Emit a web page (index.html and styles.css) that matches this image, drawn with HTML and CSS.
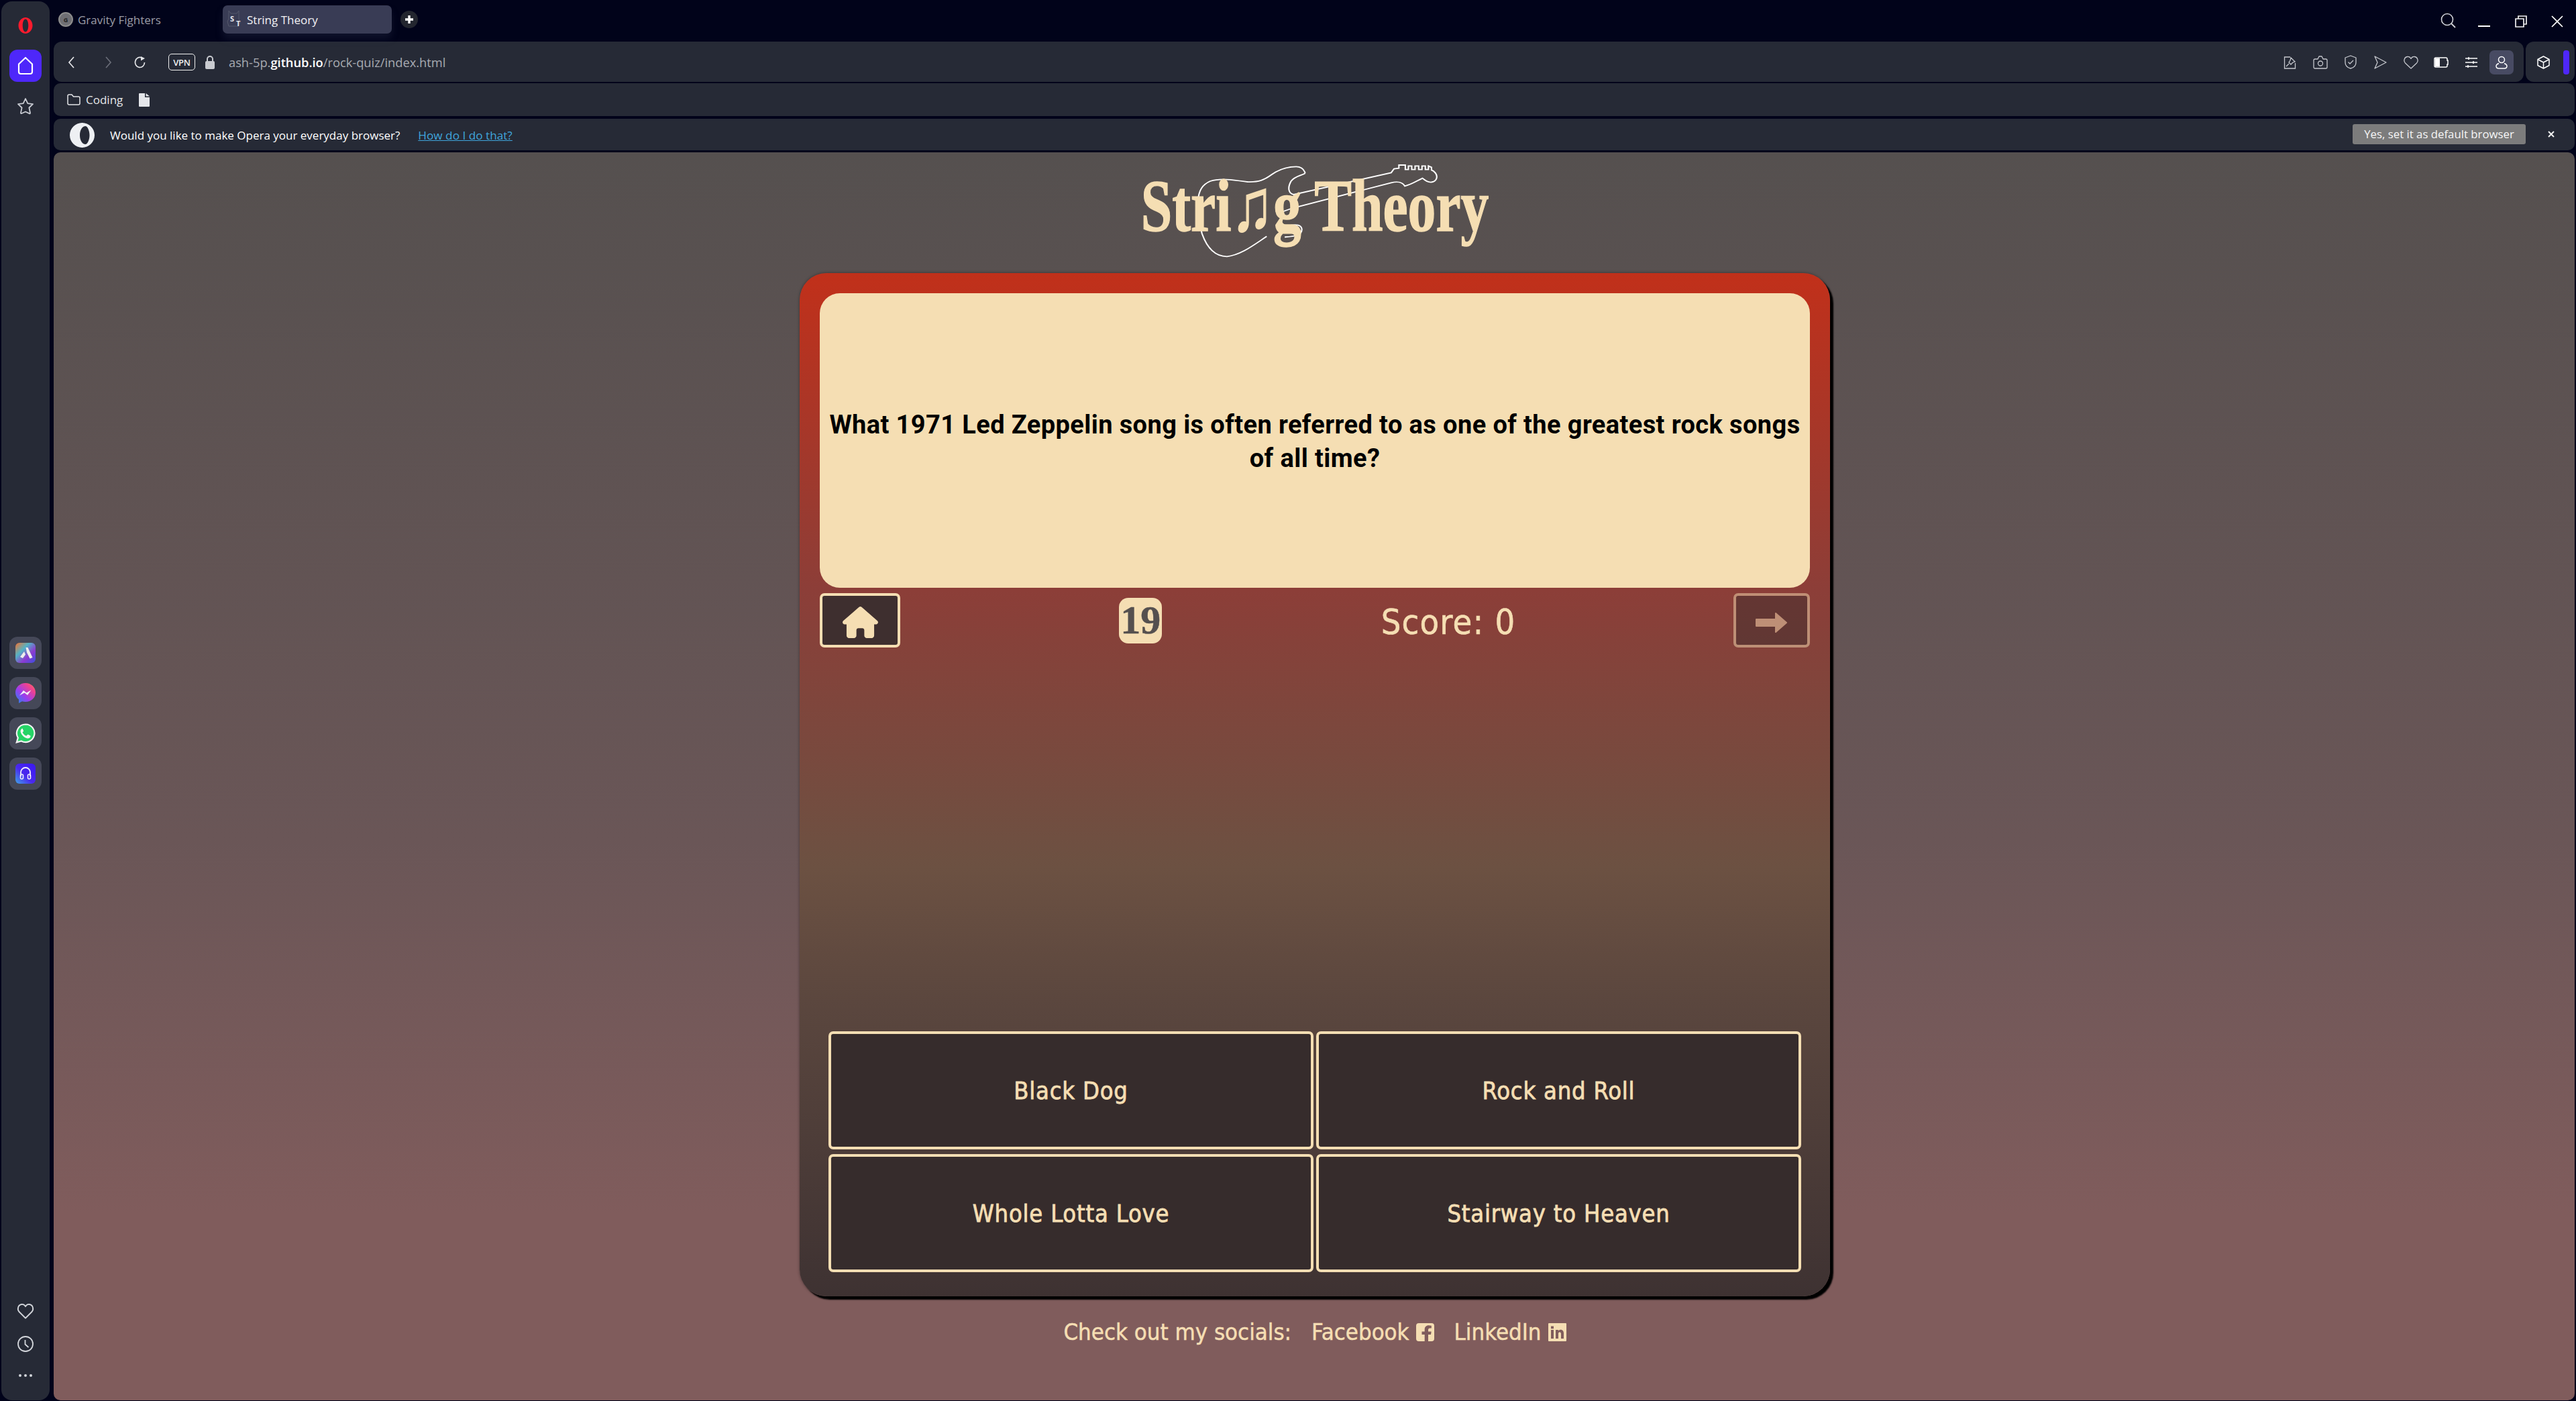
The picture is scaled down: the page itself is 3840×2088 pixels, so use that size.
FILE: index.html
```html
<!DOCTYPE html>
<html lang="en">
<head>
<meta charset="utf-8">
<title>String Theory</title>
<link rel="stylesheet" href="styles.css">
</head>
<body>
<div class="app">
  <aside class="sidebar">
    <div class="side-logo">
      <svg width="26" height="26" viewBox="0 0 26 26"><path fill="#ff1b2d" fill-rule="evenodd" d="M13 1C7.500 1 2.500 6.300 2.500 13S7.500 25 13 25s10.500-5.300 10.500-12S18.500 1 13 1zm0 2.500c2.700 0 4.300 4.500 4.300 9.500s-1.600 9.500-4.300 9.500-4.300-4.500-4.300-9.500S10.300 3.500 13 3.500z"/></svg>
    </div>
    <div class="side-home">
      <svg width="24" height="28" viewBox="0 0 24 28"><path fill="none" stroke="#fff" stroke-width="2.200" stroke-linejoin="round" d="M12 2 2 11.500V23c0 2 1.300 3 3 3h14c1.700 0 3-1 3-3V11.500z"/></svg>
    </div>
    <div class="side-star">
      <svg width="26" height="26" viewBox="0 0 26 26"><path fill="none" stroke="#c9ccd3" stroke-width="1.800" stroke-linejoin="round" d="M13 2l3.300 7.200 7.700 1-5.600 5.300 1.600 7.700c.2 1-.5 1.300-1.300.9L13 21.500 7.300 24c-.8.400-1.500.1-1.300-.9l1.600-7.600L2 10.200l7.700-1z"/></svg>
    </div>
    <div class="side-apps">
      <div class="app-tile">
        <svg width="30" height="30" viewBox="0 0 30 30"><defs><linearGradient id="ga" x1="0" y1="0" x2="1" y2="1"><stop offset="0" stop-color="#f5702d"/><stop offset=".35" stop-color="#54b3c4"/><stop offset=".65" stop-color="#8c3bd0"/><stop offset="1" stop-color="#3b4fe0"/></linearGradient></defs><rect width="30" height="30" rx="6" fill="url(#ga)"/><path fill="#eee" d="M15.500 7l3 0 7 15-4 1.500-4.500-9zM13 13l2 4.500-4 5.500-4-2z"/></svg>
      </div>
      <div class="app-tile">
        <svg width="30" height="30" viewBox="0 0 30 30"><defs><linearGradient id="gm" x1="0" y1="1" x2="1" y2="0"><stop offset="0" stop-color="#1b8fe8"/><stop offset=".4" stop-color="#9a3df0"/><stop offset=".75" stop-color="#f0428f"/><stop offset="1" stop-color="#fb7a54"/></linearGradient></defs><path fill="url(#gm)" d="M15 0C6.700 0 0 6.200 0 14.200c0 4.300 1.900 7.900 5 10.400V30l4.900-2.700c1.600.4 3.300.7 5.100.7 8.300 0 15-6 15-13.800C30 6.200 23.300 0 15 0z"/><path fill="#f1f1f6" d="M6 18.500 12 11l4.500 3.500L23.500 10.500 18 18l-4.500-3.500z"/></svg>
      </div>
      <div class="app-tile">
        <svg width="30" height="30" viewBox="0 0 30 30"><path fill="#25d366" stroke="#f2f2f2" stroke-width="2.200" d="M15.200 1.500A13.300 13.300 0 0 0 3.800 21.600L1.800 28.400l7-1.900A13.300 13.300 0 1 0 15.200 1.500z"/><path fill="#f4f4f4" d="M10.700 7.800c-.5 0-1.300.2-2 1-1.800 2-1.400 4.800.6 7.600 2.300 3.200 5.200 5.300 8.500 6 2.200.4 4.100-.7 4.600-2.400.2-.7.2-1.300.1-1.400-.2-.3-3.300-1.800-3.700-1.900-.4-.1-.7 0-.9.300-.4.500-1 1.400-1.300 1.500-.3.200-.6.100-1-.1-2.300-1-3.800-2.700-4.800-4.500-.2-.4 0-.6.200-.8.400-.4.800-.9 1-1.400.1-.3.100-.5 0-.7-.2-.4-1.100-2.700-1.400-3.200-.1-.4-.4-.4-.9-.4z"/></svg>
      </div>
      <div class="app-tile">
        <svg width="30" height="30" viewBox="0 0 30 30"><defs><linearGradient id="gh" x1="0" y1="1" x2="1" y2="0"><stop offset="0" stop-color="#3fa4e8"/><stop offset=".45" stop-color="#4a28ee"/><stop offset="1" stop-color="#3a18f0"/></linearGradient></defs><rect width="30" height="30" rx="6" fill="url(#gh)"/><path fill="none" stroke="#f0eefc" stroke-width="1.800" d="M8 19v-6a7 7 0 0 1 14 0v6"/><rect x="7.500" y="16" width="4" height="7" rx="2" fill="none" stroke="#f0eefc" stroke-width="1.600"/><rect x="18.500" y="16" width="4" height="7" rx="2" fill="none" stroke="#f0eefc" stroke-width="1.600"/></svg>
      </div>
    </div>
    <div class="side-bottom">
      <svg width="26" height="24" viewBox="0 0 26 24"><path fill="none" stroke="#d3d6db" stroke-width="1.800" stroke-linejoin="round" d="M13 22.500 3.500 13C.5 10 1.500 3 7 2c3-.4 5 1 6 3.200C14 3 16 1.600 19 2c5.500 1 6.500 8 3.500 11z"/></svg>
      <svg width="26" height="26" viewBox="0 0 26 26"><circle cx="13" cy="13" r="11" fill="none" stroke="#d3d6db" stroke-width="1.800"/><path fill="none" stroke="#d3d6db" stroke-width="1.800" d="M12.500 7v6.500l5 4.500"/></svg>
      <div class="dots"><i></i><i></i><i></i></div>
    </div>
  </aside>

  <main class="main">
    <div class="tabstrip">
      <div class="tab">
        <span class="fav-grey">G</span>
        <span>Gravity Fighters</span>
      </div>
      <div class="tab tab-active">
        <svg class="fav-st" width="22" height="26" viewBox="0 0 22 26"><path fill="none" stroke="#55586c" d="M3 1l3 4 9 0 3-4v12l2 5-3 6H3L1 17l2-4z"/></svg>
        <span class="st-s">S</span><span class="st-t">T</span>
        <span class="tab-name">String Theory</span>
      </div>
      <div class="newtab">
        <svg width="14" height="14" viewBox="0 0 14 14"><path stroke="#fff" stroke-width="3.400" d="M7 1v12M1 7h12"/></svg>
      </div>
      <div class="spacer"></div>
      <div class="win-controls">
        <svg width="24" height="24" viewBox="0 0 24 24"><circle cx="10" cy="10" r="8.500" fill="none" stroke="#cfd1d6" stroke-width="1.600"/><path stroke="#cfd1d6" stroke-width="1.800" d="M16 16l6 6"/></svg>
        <svg class="w-min" width="18" height="18" viewBox="0 0 18 18"><path stroke="#fff" stroke-width="2" d="M0 17h18"/></svg>
        <svg class="w-res" width="18" height="18" viewBox="0 0 18 18"><path fill="none" stroke="#f0f0f0" stroke-width="1.700" d="M1 5h12v12H1zM5 5V1h12v12h-4"/></svg>
        <svg class="w-close" width="18" height="18" viewBox="0 0 18 18"><path stroke="#fff" stroke-width="1.700" d="M1 1l16 16M17 1 1 17"/></svg>
      </div>
    </div>

    <div class="toolrow">
      <div class="toolbar">
        <svg class="t-back" width="10" height="18" viewBox="0 0 10 18"><path fill="none" stroke="#e4e5e8" stroke-width="1.700" d="M9 1 2 9l7 8"/></svg>
        <svg class="t-fwd" width="10" height="18" viewBox="0 0 10 18"><path fill="none" stroke="#6a6d78" stroke-width="1.700" d="M1 1l7 8-7 8"/></svg>
        <svg class="t-rel" width="18" height="18" viewBox="0 0 18 18"><path fill="none" stroke="#e4e5e8" stroke-width="1.700" d="M15.500 9A7 7.500 0 1 1 11 2"/><path fill="#e4e5e8" d="M10 0l6 3-6 3.500z"/></svg>
        <span class="vpn">VPN</span>
        <svg class="t-lock" width="16" height="20" viewBox="0 0 16 20"><path fill="none" stroke="#c9cbd0" stroke-width="2" d="M4 9V5a4 4 0 0 1 8 0v4"/><rect x="1" y="8" width="14" height="12" rx="2" fill="#c9cbd0"/></svg>
        <span class="url">ash-5p.<b>github.io</b>/rock-quiz/index.html</span>
        <div class="spacer"></div>
        <div class="tool-icons">
          <svg width="20" height="20" viewBox="0 0 20 20"><path fill="none" stroke="#c6c8ce" stroke-width="1.300" d="M10 2H1.500v17h16v-8M11 3l6 6-3 1-3 3-3-3 2-3zM8 12l-4 4"/></svg>
          <svg width="22" height="20" viewBox="0 0 22 20"><path fill="none" stroke="#c6c8ce" stroke-width="1.300" stroke-linejoin="round" d="M3 5h4l2-4h4l2 4h4q2 0 2 2v10q0 2-2 2H3q-2 0-2-2V7q0-2 2-2z"/><circle cx="11" cy="11.500" r="3.500" fill="none" stroke="#c6c8ce" stroke-width="1.300"/></svg>
          <svg width="18" height="21" viewBox="0 0 18 21"><path fill="none" stroke="#c6c8ce" stroke-width="1.300" stroke-linejoin="round" d="M9 1l8 3v7c0 5-4 8-8 9-4-1-8-4-8-9V4z"/><path fill="none" stroke="#c6c8ce" stroke-width="1.300" d="M5.500 10.500 8 13l5-5"/></svg>
          <svg width="19" height="20" viewBox="0 0 19 20"><path fill="none" stroke="#c6c8ce" stroke-width="1.300" stroke-linejoin="round" d="M1 1l17 9-17 9 4-9z"/></svg>
          <svg width="22" height="20" viewBox="0 0 22 20"><path fill="none" stroke="#c6c8ce" stroke-width="1.300" stroke-linejoin="round" d="M11 19 2.500 11C-.5 8 1 2 5.500 1.500 8 1.200 10 2.500 11 4.500c1-2 3-3.300 5.500-3 4.500.5 6 6.500 3 9.500z"/></svg>
          <svg width="22" height="16" viewBox="0 0 22 16"><path fill="none" stroke="#fff" stroke-width="1.500" d="M3 1h15q2 0 2 2v2h1v6h-1v2q0 2-2 2H3q-2 0-2-2V3q0-2 2-2z"/><path fill="#fff" d="M2 2h7v12H2z"/></svg>
          <svg width="18" height="16" viewBox="0 0 18 16"><path stroke="#fff" stroke-width="1.500" d="M0 2h18M0 8h18M0 14h18M5 0v4M12 6v4M4 12v4"/></svg>
          <div class="profile">
            <svg width="18" height="20" viewBox="0 0 18 20"><circle cx="9" cy="6" r="4.500" fill="none" stroke="#fff" stroke-width="1.500"/><path fill="none" stroke="#fff" stroke-width="1.500" d="M5 11.500C2 12.500 1 14 1 15.500 1 18 3 19 5 19h8c2 0 4-1 4-3.500 0-1.500-1-3-4-4"/></svg>
          </div>
        </div>
      </div>
      <div class="extbox">
        <svg width="19" height="20" viewBox="0 0 19 20"><path fill="none" stroke="#fff" stroke-width="1.500" stroke-linejoin="round" d="M9.500 1 18 5.500v9L9.500 19 1 14.500v-9zM1 5.500 9.500 10 18 5.500M9.500 10v9"/></svg>
        <i class="pill"></i>
      </div>
    </div>

    <div class="bookmarks">
      <svg width="20" height="17" viewBox="0 0 20 17"><path fill="none" stroke="#e4e5e8" stroke-width="1.500" stroke-linejoin="round" d="M1 3q0-2 2-2h4l2.500 3H17q2 0 2 2v8q0 2-2 2H3q-2 0-2-2z"/></svg>
      <span class="bm-name">Coding</span>
      <svg class="bm-doc" width="16" height="20" viewBox="0 0 16 20"><path fill="#e4e6ea" d="M1 0h8v6h7v13a1 1 0 0 1-1 1H1a1 1 0 0 1-1-1V1a1 1 0 0 1 1-1zM10.500 0 16 4.500h-5.500z"/></svg>
    </div>

    <div class="banner">
      <svg class="bn-logo" width="37" height="37" viewBox="0 0 37 37"><path fill="#eef0f3" fill-rule="evenodd" d="M18.500 0C8.300 0 0 8.300 0 18.500S8.300 37 18.500 37 37 28.700 37 18.500 28.700 0 18.500 0zm5 5c2.500 0 6 6 6 13.500S26 32 23.500 32c-5 0-8.500-6-8.500-13.500S18.500 5 23.500 5z"/></svg>
      <span class="bn-text">Would you like to make Opera your everyday browser?</span>
      <a class="bn-link">How do I do that?</a>
      <div class="spacer"></div>
      <span class="bn-btn">Yes, set it as default browser</span>
      <svg class="bn-x" width="10" height="10" viewBox="0 0 10 10"><path stroke="#f0f0f0" stroke-width="2" d="M1 1l8 8M9 1 1 9"/></svg>
    </div>

    <section class="page">
      <div class="logo">
        <svg class="guitar" width="600" height="200" viewBox="0 0 1568 600" preserveAspectRatio="none"><path fill="none" stroke="#fff" stroke-width="5.500" d="M770 115C765 95 755 85 735 85 700 85 665 100 640 120 610 145 590 155 545 153 495 145 440 135 400 150 370 165 355 190 352 240 350 290 357 340 368 385 385 440 415 487 465 487 520 480 570 435 620 397M690 400C725 397 757 395 757 365 755 345 735 343 715 347M685 300V285L722 270 1105 157C1130 150 1150 155 1158 172 1185 165 1205 148 1227 137 1240 150 1255 160 1270 152 1290 140 1285 112 1262 100V88L1250 82V98H1238V82H1225V98H1212V82H1198V98H1185V82H1172V98H1160V78H1135V92L1116 95 1105 112 725 210C705 205 700 180 715 150 730 128 750 127 770 115"/></svg>
        <div class="logo-text">Stri♫g Theory</div>
      </div>

      <div class="card">
        <div class="question">What 1971 Led Zeppelin song is often referred to as one of the greatest rock songs of all time?</div>
        <div class="controls">
          <button class="ctrl">
            <svg width="53" height="47" viewBox="0 0 576 512"><path fill="#f5deb3" d="M575.800 255.500c0 18-15 32.100-32 32.100h-32l.7 160.200c0 2.700-.2 5.400-.5 8.100V472c0 22.100-17.900 40-40 40H456c-1.100 0-2.200 0-3.300-.1c-1.400 .1-2.800 .1-4.200 .1H416 392c-22.100 0-40-17.900-40-40V448 384c0-17.700-14.300-32-32-32H256c-17.700 0-32 14.300-32 32v64 24c0 22.100-17.900 40-40 40H160 128.100c-1.500 0-3-.1-4.500-.2c-1.200 .1-2.400 .2-3.600 .2H104c-22.100 0-40-17.900-40-40V360c0-.9 0-1.900 .1-2.800V287.600H32c-18 0-32-14-32-32.100c0-9 3-17 10-24L266.400 8c7-7 15-8 22-8s15 2 21 7L564.800 231.500c8 7 12 15 11 24z"/></svg>
          </button>
          <div class="timer">19</div>
          <div class="score">Score: 0</div>
          <button class="ctrl ctrl-off">
            <svg width="47" height="30" viewBox="0 0 47 30"><path fill="#f5deb3" stroke="#f5deb3" stroke-width="2" stroke-linejoin="round" d="M1 10h29V1L46 15 30 29V20H1z"/></svg>
          </button>
        </div>
        <div class="answers">
          <button class="answer">Black Dog</button>
          <button class="answer">Rock and Roll</button>
          <button class="answer">Whole Lotta Love</button>
          <button class="answer">Stairway to Heaven</button>
        </div>
      </div>

      <footer class="socials">
        <span>Check out my socials:</span>
        <a class="social">Facebook
          <svg width="27" height="27" viewBox="0 0 27 27"><path fill="#f5deb3" d="M4 0h19a4 4 0 0 1 4 4v19a4 4 0 0 1-4 4h-5V17h4l.7-4.500H18V10c0-1.500.8-2.500 2.500-2.500h2.300V3.700C21.500 3.500 20 3.300 18.800 3.300c-3.800 0-6.100 2.300-6.100 6.200v3H8.500V17h4.200v10H4a4 4 0 0 1-4-4V4a4 4 0 0 1 4-4z"/></svg>
        </a>
        <a class="social">LinkedIn
          <svg width="27" height="27" viewBox="0 0 27 27"><path fill="#f5deb3" fill-rule="evenodd" d="M1 0h25a1 1 0 0 1 1 1v25a1 1 0 0 1-1 1H1a1 1 0 0 1-1-1V1a1 1 0 0 1 1-1zM4 10v13h4V10zM4 4.500v3.800h4V4.500zM11 10v13h4v-7c0-4 4-3.500 4 0v7h4v-8c0-6-6-6.500-8-3.500V10z"/></svg>
        </a>
      </footer>
    </section>
  </main>
</div>
</body>
</html>
```
FILE: styles.css
```css
* { box-sizing: border-box; }
html, body { margin: 0; height: 2088px; overflow: hidden; }
body { background: #01031a; color: #fff; font-family: "Open Sans", "Liberation Sans", sans-serif; }
svg { display: block; flex: none; }
.spacer { flex: 1; }

.app { display: flex; gap: 6px; height: 2088px; padding: 2px 2px 1px 2px; }

.sidebar { width: 72px; background: #262a36; border-radius: 16px; display: flex; flex-direction: column; align-items: center; }
.side-logo { margin-top: 23px; height: 26px; }
.side-home { margin-top: 23px; width: 48px; height: 48px; border-radius: 12px; background: #4e27fa; display: flex; align-items: center; justify-content: center; }
.side-star { margin-top: 23px; }
.side-apps { margin-top: 778px; display: flex; flex-direction: column; gap: 12px; }
.app-tile { width: 48px; height: 48px; border-radius: 12px; background: #454858; display: flex; align-items: center; justify-content: center; }
.side-bottom { margin-top: auto; padding-bottom: 35px; display: flex; flex-direction: column; align-items: center; gap: 24px; }
.dots { display: flex; gap: 4px; margin-top: 8px; }
.dots i { width: 4px; height: 4px; border-radius: 50%; background: #d3d6db; }

.main { flex: 1; min-width: 0; display: flex; flex-direction: column; }

.tabstrip { height: 60px; display: flex; align-items: flex-start; padding-top: 6px; font-size: 17px; }
.tab { width: 252px; height: 42px; display: flex; align-items: center; gap: 7px; padding-left: 7px; color: #9b9ca6; }
.fav-grey { width: 22px; height: 22px; border-radius: 50%; background: #6f6f74; border: 2px solid #8d8d8d; color: #222; font-size: 9px; font-weight: 700; display: flex; align-items: center; justify-content: center; }
.tab-active { position: relative; background: #393c55; border-radius: 7px; color: #f2f2f4; box-shadow: 0 8px 12px rgba(60, 62, 90, .25); padding-left: 36px; }
.fav-st { position: absolute; left: 6px; top: 7px; }
.st-s, .st-t { position: absolute; font-size: 11px; font-weight: 700; color: #e8e8ee; }
.st-s { left: 11px; top: 12px; }
.st-t { left: 20px; top: 19px; }
.newtab { width: 26px; height: 26px; margin: 8px 0 0 13px; border-radius: 50%; background: #23262f; display: flex; align-items: center; justify-content: center; }
.win-controls { display: flex; align-items: flex-start; padding: 11px 17px 0 0; }
.w-min { margin-left: 32px; margin-top: 3px; }
.w-res { margin-left: 37px; margin-top: 4px; }
.w-close { margin-left: 36px; margin-top: 4px; }

.toolrow { display: flex; gap: 3px; height: 60px; }
.toolbar { flex: 1; background: #262a36; border-radius: 12px; display: flex; align-items: center; padding-top: 1px; }
.t-back { margin-left: 21px; }
.t-fwd { margin-left: 46px; }
.t-rel { margin-left: 33px; }
.vpn { margin-left: 33px; width: 40px; height: 25px; border: 1.500px solid #f0f0f0; border-radius: 5px; font-size: 13px; font-weight: 600; display: flex; align-items: center; justify-content: center; letter-spacing: -.3px; color: #f0f0f0; }
.t-lock { margin-left: 14px; }
.url { margin-left: 20px; font-size: 18.300px; color: #a8aab2; white-space: nowrap; }
.url b { font-weight: 600; color: #fff; }
.tool-icons { display: grid; grid-auto-flow: column; grid-auto-columns: 45px; justify-items: center; align-items: center; padding-right: 11px; }
.profile { width: 36px; height: 36px; border-radius: 7px; background: #484b63; display: flex; align-items: center; justify-content: center; }
.extbox { width: 73px; background: #262a36; border-radius: 12px; display: flex; align-items: center; padding-left: 17px; gap: 20px; padding-top: 1px; }
.pill { width: 9px; height: 36px; border-radius: 4px; background: #4e27fa; }

.bookmarks { height: 49px; margin-top: 2px; background: #262a36; border-radius: 10px; display: flex; align-items: center; padding-left: 20px; font-size: 17px; color: #e4e5e8; }
.bm-name { margin-left: 8px; }
.bm-doc { margin-left: 24px; }

.banner { height: 47px; margin-top: 4px; background: #262a36; border-radius: 10px; display: flex; align-items: center; padding-left: 24px; padding-top: 2px; font-size: 17px; }
.bn-text { margin-left: 23px; color: #fff; }
.bn-link { margin-left: 27px; font-size: 17.200px; color: #3fa5dc; text-decoration: underline; }
.bn-btn { background: #7c7c7c; height: 30px; width: 258px; margin-top: -4px; border-radius: 3px; font-size: 16.800px; color: #f6f6f6; display: flex; align-items: center; justify-content: center; }
.bn-x { margin: -4px 30px 0 33px; }

.page { height: 1860px; margin-top: 3px; padding-left: 2px; background: linear-gradient(#55504f, #6a5657 55%, #805c5c 85%); border-radius: 10px; display: flex; flex-direction: column; align-items: center; font-family: "DejaVu Sans Condensed", "DejaVu Sans", sans-serif; color: #f5deb3; }
.logo { position: relative; width: 618px; height: 180px; }
.logo-text { position: relative; display: flex; justify-content: center; font-family: "Liberation Serif", serif; font-weight: 700; font-size: 110px; line-height: 1; color: #f5deb3; -webkit-text-stroke: 1.500px #f5deb3; white-space: nowrap; padding-top: 25px; transform: scaleX(.76); }
.guitar { position: absolute; left: 0; top: -7px; }

.card { width: 1536px; height: 1525px; padding: 30px; border-radius: 40px; background: linear-gradient(#c1301a 0%, #8c3e38 31%, #6c5142 58%, #5a463e 72%, #3e3232 100%); box-shadow: 5px 5px 2px #000, 0 0 4px rgba(0, 0, 0, .4); display: flex; flex-direction: column; }
.question { height: 439px; background: #f5deb3; border-radius: 30px; color: #000; font-family: Roboto, sans-serif; font-weight: 700; font-size: 38px; letter-spacing: .4px; line-height: 50px; display: flex; align-items: center; text-align: center; padding: 2px 10px 0; }
.controls { display: flex; justify-content: space-between; align-items: center; height: 81px; margin-top: 8px; }
.ctrl { width: 120px; height: 81px; padding: 6px 0 0; border: 4px solid #f5deb3; border-radius: 7px; background: #3e2f2f; display: flex; align-items: center; justify-content: center; }
.ctrl-off { width: 114px; opacity: .5; }
.timer { width: 64px; height: 68px; border-radius: 14px; background: #f5deb3; color: #55504f; font-family: "Liberation Serif", serif; font-weight: 700; font-size: 60px; -webkit-text-stroke: .5px #55504f; display: flex; align-items: center; justify-content: center; }
.score { width: 199px; font-size: 52px; letter-spacing: 1.200px; white-space: nowrap; line-height: 60px; padding-top: 4px; -webkit-text-stroke: .6px #f5deb3; }
.answers { margin: auto 13px 6px; display: grid; grid-template-columns: 723px 723px; column-gap: 4px; row-gap: 7px; }
.answer { height: 176px; border: 4px solid #f5deb3; border-radius: 7px; background: #362c2c; color: #f5deb3; font: 36px "DejaVu Sans Condensed", sans-serif; letter-spacing: .8px; -webkit-text-stroke: .8px #f5deb3; }

.socials { display: flex; align-items: center; gap: 30px; margin-top: 33px; font-size: 34.500px; -webkit-text-stroke: .5px #f5deb3; }
.social { display: flex; align-items: center; gap: 10px; }
```
